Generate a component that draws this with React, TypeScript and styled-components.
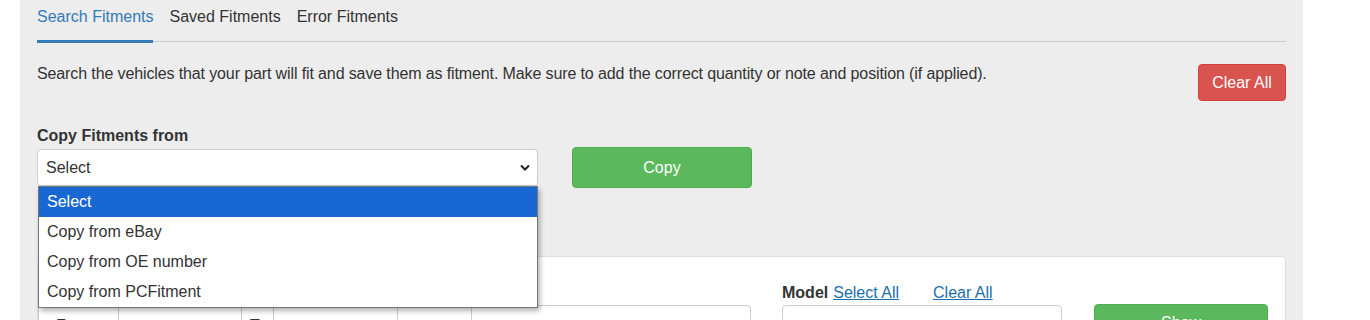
import styled, { createGlobalStyle } from "styled-components";

const GlobalStyle = createGlobalStyle`
    body {
        margin: 0;
        background: #ffffff;
        font-family: "Liberation Sans", Arial, sans-serif;
        color: #333333;
    }
`;

const tabs = ["Search Fitments", "Saved Fitments", "Error Fitments"];
const copyOptions = ["Select", "Copy from eBay", "Copy from OE number", "Copy from PCFitment"];

function App() {
    return (
        <>
            <GlobalStyle />
            <Panel>
                <Nav>
                    {tabs.map((tab, i) => (
                        <Tab key={tab} active={i === 0}>{tab}</Tab>
                    ))}
                </Nav>
                <IntroRow>
                    <Intro>
                        Search the vehicles that your part will fit and save them as fitment. Make sure to add the correct quantity or note and position (if applied).
                    </Intro>
                    <Button variant="danger">Clear All</Button>
                </IntroRow>
                <FieldLabel>Copy Fitments from</FieldLabel>
                <CopyRow>
                    <SelectWrap>
                        <SelectBox>
                            <span>Select</span>
                            <svg width="10" height="7" viewBox="0 0 10 7">
                                <polyline points="1,1.5 5,5.5 9,1.5" fill="none" stroke="#222" strokeWidth="2" />
                            </svg>
                        </SelectBox>
                        <OptionList>
                            {copyOptions.map((opt, i) => (
                                <Option key={opt} selected={i === 0}>{opt}</Option>
                            ))}
                        </OptionList>
                    </SelectWrap>
                    <Button variant="success" wide>Copy</Button>
                </CopyRow>
                <Card>
                    <Column>
                        <FieldLabel>&nbsp;</FieldLabel>
                        <InputGroup>
                            <Addon width={80}>From</Addon>
                            <Cell width={123} />
                            <Addon width={32}>To</Addon>
                            <Cell width={124} />
                            <Addon width={74}>or</Addon>
                            <Cell grow />
                        </InputGroup>
                    </Column>
                    <Column>
                        <LabelRow>
                            <FieldLabel>Model</FieldLabel>
                            <TextLink>Select All</TextLink>
                            <TextLink spaced>Clear All</TextLink>
                        </LabelRow>
                        <TextInput />
                    </Column>
                    <Column>
                        <FieldLabel>&nbsp;</FieldLabel>
                        <Button variant="success" full>Show</Button>
                    </Column>
                </Card>
            </Panel>
        </>
    );
}

const Panel = styled.div`
    margin-left: 20px;
    width: 1283px;
    height: 320px;
    box-sizing: border-box;
    padding: 0 17px;
    background: #ededed;
    overflow: hidden;
`;

const Nav = styled.div`
    display: flex;
    height: 42px;
    box-sizing: border-box;
    border-bottom: 1px solid #cccccc;
`;

const Tab = styled.div<{ active?: boolean }>`
    height: 43px;
    box-sizing: border-box;
    padding-top: 7px;
    margin-right: 16px;
    font-size: 16px;
    line-height: 20px;
    color: ${props => props.active ? "#337ab7" : "#333333"};
    border-bottom: 3px solid ${props => props.active ? "#337ab7" : "transparent"};
`;

const IntroRow = styled.div`
    display: flex;
    justify-content: space-between;
    align-items: flex-start;
    margin-top: 22px;
`;

const Intro = styled.p`
    margin: 0;
    font-size: 16px;
    line-height: 20px;
    letter-spacing: -0.12px;
`;

const Button = styled.button<{ variant: "danger" | "success"; wide?: boolean; full?: boolean }>`
    height: ${props => props.wide ? "41px" : "37px"};
    width: ${props => props.wide ? "180px" : props.full ? "174px" : "88px"};
    padding: 0;
    border: 1px solid ${props => props.variant === "danger" ? "#d43f3a" : "#4cae4c"};
    border-radius: 4px;
    background: ${props => props.variant === "danger" ? "#d9534f" : "#5cb85c"};
    color: #ffffff;
    font-family: "Liberation Sans", Arial, sans-serif;
    font-size: 16px;
    flex-shrink: 0;
`;

const FieldLabel = styled.div`
    font-size: 16px;
    font-weight: bold;
    line-height: 20px;
    margin-top: 25px;
    margin-bottom: 1px;
`;

const CopyRow = styled.div`
    display: flex;
    align-items: center;
    gap: 34px;
`;

const SelectWrap = styled.div`
    position: relative;
    width: 501px;
`;

const SelectBox = styled.div`
    height: 37px;
    box-sizing: border-box;
    display: flex;
    align-items: center;
    justify-content: space-between;
    padding: 0 7px 0 8px;
    background: #ffffff;
    border: 1px solid #cccccc;
    border-radius: 4px;
    font-size: 16px;
`;

const OptionList = styled.ul`
    position: absolute;
    top: 100%;
    left: 1px;
    width: 500px;
    box-sizing: border-box;
    margin: 0;
    padding: 0;
    list-style: none;
    background: #ffffff;
    border: 1px solid #767676;
    box-shadow: 2px 3px 5px rgba(0, 0, 0, 0.3);
    z-index: 2;
`;

const Option = styled.li<{ selected?: boolean }>`
    height: 30px;
    line-height: 30px;
    padding-left: 8px;
    font-size: 16px;
    color: ${props => props.selected ? "#ffffff" : "#333333"};
    background: ${props => props.selected ? "#1967d2" : "transparent"};
`;

const Card = styled.div`
    display: grid;
    grid-template-columns: 713px 280px 174px;
    column-gap: 31px;
    margin-top: 68px;
    padding: 1px 18px 0 0;
    background: #ffffff;
    border: 1px solid #dddddd;
    border-radius: 4px;
    height: 100px;

    & > div:nth-child(3) {
        margin-left: 1px;
    }
`;

const Column = styled.div`
    display: flex;
    flex-direction: column;
`;

const LabelRow = styled.div`
    display: flex;
    align-items: baseline;
    gap: 5px;
`;

const TextLink = styled.a<{ spaced?: boolean }>`
    font-size: 16px;
    color: #1a6eb0;
    text-decoration: underline;
    margin-left: ${props => props.spaced ? "29px" : "0"};
`;

const InputGroup = styled.div`
    display: flex;
    height: 37px;
    margin-top: 1px;
    border: 1px solid #cccccc;
    border-radius: 4px;
    overflow: hidden;
`;

const Addon = styled.div<{ width: number }>`
    width: ${props => props.width}px;
    flex-shrink: 0;
    box-sizing: border-box;
    padding: 11px 0 0 17px;
    border-right: 1px solid #cccccc;
    font-size: 16px;
    background: #ffffff;

    &:nth-child(3) {
        padding-left: 8px;
    }
`;

const Cell = styled.div<{ width?: number; grow?: boolean }>`
    width: ${props => props.width ? `${props.width}px` : "auto"};
    flex: ${props => props.grow ? "1" : "none"};
    box-sizing: border-box;
    border-right: ${props => props.grow ? "none" : "1px solid #cccccc"};
`;

const TextInput = styled.div`
    height: 37px;
    margin-top: 1px;
    box-sizing: border-box;
    border: 1px solid #cccccc;
    border-radius: 4px;
`;

export default App;
